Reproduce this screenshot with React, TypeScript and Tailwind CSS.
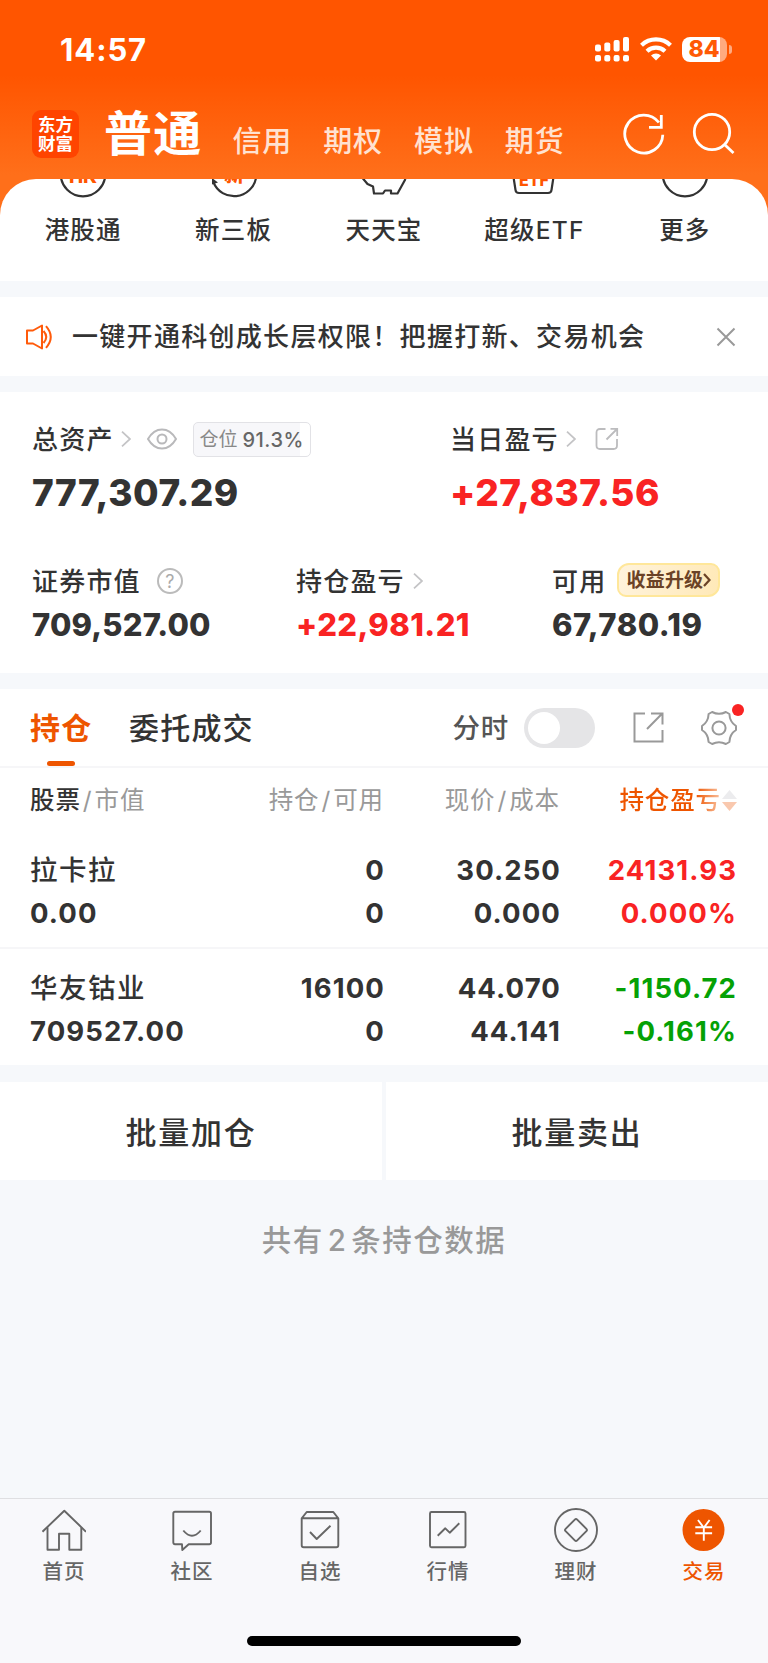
import type { ReactNode } from 'react';

const shortcuts = [
  { label: '港股通', icon: <HkIcon /> },
  { label: '新三板', icon: <NewBoardIcon /> },
  { label: '天天宝', icon: <PiggyIcon /> },
  { label: '超级ETF', icon: <EtfIcon /> },
  { label: '更多', icon: <MoreIcon /> },
];

const holdings = [
  {
    name: '拉卡拉',
    value: '0.00',
    amount: '0',
    available: '0',
    price: '30.250',
    cost: '0.000',
    profit: '24131.93',
    rate: '0.000%',
    color: 'text-[#f92323]',
  },
  {
    name: '华友钴业',
    value: '709527.00',
    amount: '16100',
    available: '0',
    price: '44.070',
    cost: '44.141',
    profit: '-1150.72',
    rate: '-0.161%',
    color: 'text-[#05a105]',
  },
];

/* The shortcut icons are scrolled under the header, only their lower part shows */
function ShortcutSvg({ children }: { children: ReactNode }) {
  return (
    <svg width="60" height="20" viewBox="0 0 60 20" fill="none" stroke="#333" strokeWidth="2.2">
      {children}
    </svg>
  );
}

function HkIcon() {
  return (
    <ShortcutSvg>
      <circle cx="30" cy="-5" r="22.3" />
      <text x="30" y="3.5" textAnchor="middle" fontSize="19" fontWeight="800" fill="#ff5500" stroke="none">
        HK
      </text>
    </ShortcutSvg>
  );
}

function NewBoardIcon() {
  return (
    <ShortcutSvg>
      <path d="M9.5 3.5A22.3 22.3 0 0 0 52 -1" />
      <path d="M8 -1l6 4.5-6 2z" fill="#333" stroke="none" />
      <text x="30" y="3" textAnchor="middle" fontSize="20" fontWeight="800" fill="#ff5500" stroke="none">
        新
      </text>
    </ShortcutSvg>
  );
}

function PiggyIcon() {
  return (
    <ShortcutSvg>
      <path d="M8.5 -1l5 6 5.5 2.5 1 7h9l2-3h6v3h6.5l8-14.5" strokeLinejoin="round" />
    </ShortcutSvg>
  );
}

function EtfIcon() {
  return (
    <ShortcutSvg>
      <path d="M9.5 -2l2 13q.3 3 3.5 3h29q3.2 0 3.5-3l2-13" />
      <text x="30" y="7" textAnchor="middle" fontSize="16" fontWeight="800" fill="#ff5500" stroke="none">
        ETF
      </text>
    </ShortcutSvg>
  );
}

function MoreIcon() {
  return (
    <ShortcutSvg>
      <circle cx="30" cy="-5" r="22.3" />
    </ShortcutSvg>
  );
}

function Arrow({ className }: { className: string }) {
  return (
    <svg className={className} width="10" height="16" viewBox="0 0 10 16" fill="none" stroke="#c4c4c6" strokeWidth="1.8">
      <path d="M1 .7l8 7.3-8 7.3" />
    </svg>
  );
}

function StatusBar() {
  return (
    <div className="flex h-[98px] items-center pl-[60px] pr-[36px]">
      <span className="text-[31px] font-bold leading-none tracking-[0.9px]">14:57</span>
      <svg className="ml-auto" width="34" height="25" viewBox="0 0 34 25" fill="#fff">
        <rect x="0" y="7.5" width="6" height="7" rx="2" />
        <rect x="9.3" y="5.5" width="6" height="9" rx="2" />
        <rect x="18.6" y="3" width="6" height="11.5" rx="2" />
        <rect x="28" y="0" width="6" height="14.5" rx="2" />
        <rect x="0" y="18" width="6" height="6.5" rx="2" />
        <rect x="9.3" y="18" width="6" height="6.5" rx="2" />
        <rect x="18.6" y="18" width="6" height="6.5" rx="2" />
        <rect x="28" y="18" width="6" height="6.5" rx="2" />
      </svg>
      <svg className="ml-[11px]" width="32" height="24" viewBox="0 0 32 24" fill="none" stroke="#fff" strokeWidth="4.2">
        <path d="M1.5 8.2a21 21 0 0 1 29 0" />
        <path d="M7 14.2a13 13 0 0 1 18 0" />
        <path d="M11 18.5a7.3 7.3 0 0 1 10 0l-5 5z" fill="#fff" stroke="none" />
      </svg>
      <div className="ml-[10px] flex items-center">
        <div className="flex h-[25px] w-[45px] items-center justify-center rounded-[8px] bg-[linear-gradient(90deg,#fff_84%,#ffaa80_84%)] pr-[1px] text-[23px] font-extrabold leading-none text-[#ff5a05]">
          84
        </div>
        <div className="ml-[2px] h-[9px] w-[3px] rounded-r-full bg-[#ffaa80]" />
      </div>
    </div>
  );
}

function Header() {
  return (
    <header className="h-[219px] bg-[linear-gradient(180deg,#ff5500_0px,#ff5500_75px,#ff6f1a_175px,#ff6f1a_219px)] text-white">
      <StatusBar />
      <div className="flex h-[81px] pl-8 pr-[33px]">
        <div className="mt-[12px] flex h-[48px] w-[47px] flex-col items-center justify-center rounded-[9px] bg-[#ff4400] text-[17.5px] font-bold leading-[19.5px]">
          <span>东方</span>
          <span>财富</span>
        </div>
        <span className="ml-[25px] mt-[12px] text-[48px] font-bold leading-[48px] tracking-[1.2px]">普通</span>
        <div className="ml-[30px] mt-[29px] flex gap-[31px] text-[29px] font-medium leading-[30px] tracking-[0.9px] text-[#ffe2d1]">
          <span>信用</span>
          <span>期权</span>
          <span>模拟</span>
          <span>期货</span>
        </div>
        <svg className="ml-auto mt-[14px]" width="44" height="44" viewBox="0 0 44 44" fill="none" stroke="#fff" strokeWidth="2.8">
          <path d="M40.8 22.8a19 19 0 1 1-3.9-12.3" />
          <path d="M39.3 3v12.3H27" />
        </svg>
        <svg className="ml-[25px] mt-[14px]" width="44" height="44" viewBox="0 0 44 44" fill="none" stroke="#fff" strokeWidth="2.8">
          <circle cx="21" cy="20" r="17.7" />
          <path d="M33.5 32.5L42.5 41" />
        </svg>
      </div>
    </header>
  );
}

function Notice() {
  return (
    <div className="mt-4 flex h-[79px] items-center bg-white pl-[26px] pr-[32px]">
      <svg width="27" height="26" viewBox="0 0 27 26" fill="none" stroke="#ff5a0a" strokeWidth="2" strokeLinejoin="round">
        <path d="M1 6.5h6l9-5v23l-9-5H1z" />
        <path d="M17.5 7q5.5 6 0 12M20 2.2q9.5 10.8 0 21.6" />
      </svg>
      <span className="ml-[19px] text-[26px] font-medium leading-none tracking-[1.3px]">
        一键开通科创成长层权限！把握打新、交易机会
      </span>
      <svg className="ml-auto" width="20" height="20" viewBox="0 0 20 20" fill="none" stroke="#999" strokeWidth="2">
        <path d="M1.5 1.5l17 17M18.5 1.5l-17 17" />
      </svg>
    </div>
  );
}

function Assets() {
  return (
    <section className="mt-4 h-[281px] bg-white pl-8 pt-[27px]">
      <div className="flex">
        <div className="w-[418px]">
          <div className="flex h-10 items-center text-[26px] font-medium tracking-[1.2px]">
            总资产
            <Arrow className="ml-[7px]" />
            <svg className="ml-[16px]" width="30" height="22" viewBox="0 0 30 22" fill="none" stroke="#b9b9bb" strokeWidth="2">
              <path d="M1 11Q6.5 1.5 15 1.5T29 11Q23.5 20.5 15 20.5T1 11z" />
              <circle cx="15" cy="11" r="4.5" />
            </svg>
            <div className="ml-[16px] flex h-[35px] w-[118px] items-center justify-center rounded-[5px] border border-[#e2e2e6] bg-[linear-gradient(90deg,#f7f7fa_91%,#fff_91%)] pt-[2px] text-[20px] tracking-[0.5px] text-[#666]">
              <span className="mr-[5px] text-[19px] font-normal tracking-normal text-[#888]">仓位</span>91.3%
            </div>
          </div>
          <div className="mt-3 text-[37px] font-extrabold leading-[44px] tracking-[0.5px]">777,307.29</div>
        </div>
        <div>
          <div className="flex h-10 items-center text-[26px] font-medium tracking-[1.2px]">
            当日盈亏
            <Arrow className="ml-[7px]" />
            <svg className="ml-[19px]" width="24" height="24" viewBox="0 0 24 24" fill="none" stroke="#bcbcbe" strokeWidth="1.8">
              <path d="M10.5 2H5q-3.5 0-3.5 3.5v13Q1.5 22 5 22h13.5q3.5 0 3.5-3.5V12" />
              <path d="M11.5 12.5L22 2M15.5 1.8H22.2V9" />
            </svg>
          </div>
          <div className="mt-3 text-[37px] font-extrabold leading-[44px] tracking-[0.5px] text-[#f92323]">+27,837.56</div>
        </div>
      </div>
      <div className="mt-[48px] flex">
        <div className="w-[264px]">
          <div className="flex h-9 items-center text-[26px] font-medium tracking-[1.2px]">
            证券市值
            <span className="ml-[16px] flex h-[26px] w-[26px] items-center justify-center rounded-full border-2 border-[#bbb] text-[18px] font-normal tracking-normal text-[#aaa]">
              ?
            </span>
          </div>
          <div className="mt-[8px] text-[31px] font-extrabold leading-9 tracking-[0.2px]">709,527.00</div>
        </div>
        <div className="w-[256px]">
          <div className="flex h-9 items-center text-[26px] font-medium tracking-[1.2px]">
            持仓盈亏
            <Arrow className="ml-[8px]" />
          </div>
          <div className="mt-[8px] text-[31px] font-extrabold leading-9 tracking-[0.4px] text-[#f92323]">+22,981.21</div>
        </div>
        <div>
          <div className="flex h-9 items-center text-[26px] font-medium tracking-[1.2px]">
            可用
            <div className="mb-[3px] ml-[11px] flex h-[34px] w-[103px] items-center justify-center rounded-[9px] rounded-br-[12px] rounded-tl-[12px] border-2 border-[#ffe79a] bg-[linear-gradient(100deg,#fff3dc,#ffe9b8)] pt-[3px] text-[19px] font-bold tracking-[0.2px] text-[#6b4226]">
              收益升级
              <svg className="mb-[2px]" width="8" height="14" viewBox="0 0 8 14" fill="none" stroke="#6b4226" strokeWidth="2.2">
                <path d="M1 1l5.5 6L1 13" />
              </svg>
            </div>
          </div>
          <div className="mt-[8px] text-[31px] font-extrabold leading-9 tracking-[0.5px]">67,780.19</div>
        </div>
      </div>
    </section>
  );
}

function Tabs() {
  return (
    <div className="flex h-[79px] border-b-2 border-[#f6f6f8] pl-[30px] pr-[31px]">
      <div className="flex w-[62px] flex-col whitespace-nowrap text-[30px] font-bold leading-[79px] tracking-[1.3px] text-[#ee5500]">
        持仓
        <span className="-mt-[7px] ml-[17px] h-[6px] w-[28px] rounded-[3px] bg-[#ee5500]" />
      </div>
      <span className="ml-[37px] text-[30px] font-medium leading-[79px] tracking-[1.2px]">委托成交</span>
      <div className="ml-auto flex h-[77px] items-center">
        <span className="pt-[2px] text-[27.5px] font-medium tracking-[0.7px] text-[#555]">分时</span>
        <div className="ml-[15px] flex h-10 w-[71px] items-center rounded-full bg-[#e5e5e7] pl-1">
          <div className="h-8 w-8 rounded-full bg-white" />
        </div>
        <svg className="ml-[38px]" width="31" height="31" viewBox="0 0 31 31" fill="none" stroke="#999" strokeWidth="2">
          <path d="M12 1.5H1.5v28h28V18" />
          <path d="M14 17L29 1.8M18 1.5H29.5V12.5" />
        </svg>
        <div className="relative ml-[37px]">
          <svg width="36" height="36" viewBox="-18 -18 36 36" fill="none" stroke="#999" strokeWidth="2" strokeLinejoin="round">
            <path d="M17 -2Q10.7 -6 10.4 -14L6.9 -16Q0 -12.3 -6.900 -16L-10.4 -14Q-10.7 -6 -17 -2V2Q-10.7 6 -10.4 14L-6.9 16Q0 12.3 6.9 16L10.4 14Q10.7 6 17 2Z" />
            <circle r="6.6" />
          </svg>
          <span className="absolute -top-[6px] left-[31px] h-3 w-3 rounded-full bg-[#f92323]" />
        </div>
      </div>
    </div>
  );
}

function Holdings() {
  return (
    <section className="mt-4 bg-white">
      <Tabs />
      <div className="grid h-[63px] grid-cols-[180px_174px_176px_177px] items-center pl-[30px] pt-[1px] text-[24.5px] tracking-[0.9px] text-[#999]">
        <div>
          <span className="font-medium text-[#333]">股票</span>
          <span className="mx-[2px]">/</span>市值
        </div>
        <div className="text-right">
          持仓<span className="mx-[2px]">/</span>可用
        </div>
        <div className="text-right">
          现价<span className="mx-[2px]">/</span>成本
        </div>
        <div className="flex items-center justify-end font-medium text-[#ee5500]">
          <span className="bg-[linear-gradient(90deg,#ee5500_75%,#f9c4a4)] bg-clip-text text-transparent">持仓盈亏</span>
          <svg className="ml-[1px]" width="15" height="21" viewBox="0 0 15 21">
            <path d="M7.5 0L15 9H0z" fill="#ececee" />
            <path d="M7.5 21L0 12h15z" fill="#f9c8ae" />
          </svg>
        </div>
      </div>
      {holdings.map((h, i) => (
        <div
          key={h.name}
          className={`grid grid-cols-[180px_175px_176px_176px] pl-[30px] pt-[18px] text-[27.5px] font-bold leading-[43px] tracking-[1.1px] ${i === 0 ? 'h-[118px] border-b-2 border-[#f6f6f8]' : 'h-[116px]'}`}
        >
          <div>
            <div className="text-[27.5px] font-medium tracking-[1.5px]">{h.name}</div>
            <div>{h.value}</div>
          </div>
          <div className="text-right">
            <div>{h.amount}</div>
            <div>{h.available}</div>
          </div>
          <div className="text-right">
            <div>{h.price}</div>
            <div>{h.cost}</div>
          </div>
          <div className={`text-right ${h.color}`}>
            <div>{h.profit}</div>
            <div>{h.rate}</div>
          </div>
        </div>
      ))}
    </section>
  );
}

function NavItem({ label, active, children }: { label: string; active?: boolean; children: ReactNode }) {
  return (
    <div className={`flex flex-1 flex-col items-center pt-[9px] ${active ? 'text-[#ee5500]' : 'text-[#666]'}`}>
      <svg width="44" height="44" viewBox="0 0 44 44" fill="none" stroke="currentColor" strokeWidth="1.9" strokeLinejoin="round">
        {children}
      </svg>
      <span className="mt-[7px] text-[20.5px] font-medium leading-[26px] tracking-[1px]">{label}</span>
    </div>
  );
}

function BottomNav() {
  return (
    <nav className="mt-auto flex h-[165px] flex-col border-t border-[#dfdfe2] bg-[#f8f8fb]">
      <div className="flex">
        <NavItem label="首页">
          <path d="M.5 23.7L22.3 2.7 44 23.7" />
          <path d="M5.5 19.5v22.2H17v-16h10.3v16h12V19.5" />
        </NavItem>
        <NavItem label="社区">
          <path d="M5 3.7h34.3q1.7 0 1.7 1.7v29.2q0 1.7-1.7 1.7H18.7L12.3 42l-.3-5.7H5q-1.7 0-1.7-1.7V5.4q0-1.7 1.7-1.7z" />
          <path d="M13.3 22.5q8.7 10.5 17.4 0" />
        </NavItem>
        <NavItem label="自选">
          <path d="M3.7 10.3L8.7 4h26.6l5 6.3v27q0 2-2 2H5.7q-2 0-2-2zM3.7 10.3h36.6" />
          <path d="M12 24l6.7 7L32.5 17.7" />
        </NavItem>
        <NavItem label="行情">
          <rect x="4" y="4" width="35.5" height="35.3" rx="1.5" />
          <path d="M11.7 27.7l7.6-7.4 4.4 4.4 9.6-9.4" />
        </NavItem>
        <NavItem label="理财">
          <circle cx="22" cy="22" r="21" />
          <path d="M20.8 11.6q1.2-1.2 2.4 0l9.2 9.2q1.2 1.2 0 2.4l-9.2 9.2q-1.2 1.2-2.4 0l-9.2-9.2q-1.2-1.2 0-2.4z" />
        </NavItem>
        <NavItem label="交易" active>
          <circle cx="21.5" cy="22" r="21" fill="currentColor" stroke="none" />
          <path d="M16 12l5.8 7.7L27.6 12M21.8 19.3v13.4M13.3 19.3h16.8M13.3 25.3h16.8" stroke="#fff" />
        </NavItem>
      </div>
      <div className="mx-auto mt-auto mb-[17px] h-[10px] w-[274px] rounded-full bg-black" />
    </nav>
  );
}

export default function App() {
  return (
    <div className="flex h-[1663px] w-[768px] flex-col overflow-hidden bg-[#f6f8fb] font-[Inter,'Noto_Sans_CJK_SC',sans-serif] text-[#333]">
      <Header />
      <div className="relative -mt-10 flex h-[102px] overflow-hidden rounded-t-[36px] bg-white px-2">
        {shortcuts.map((s) => (
          <div key={s.label} className="flex flex-1 flex-col items-center">
            {s.icon}
            <span className="mt-[16px] text-[24.5px] font-medium leading-[30px] tracking-[1.2px]">{s.label}</span>
          </div>
        ))}
      </div>
      <Notice />
      <Assets />
      <Holdings />
      <div className="mt-[17px] flex h-[98px] gap-1 text-[31px] font-medium leading-[102px] tracking-[1.7px]">
        <div className="flex-1 bg-white text-center">批量加仓</div>
        <div className="flex-1 bg-white text-center">批量卖出</div>
      </div>
      <div className="mt-[40px] text-center text-[29.5px] font-medium leading-10 tracking-[1.5px] text-[#999]">
        共有<span className="mx-[4px]">2</span>条持仓数据
      </div>
      <BottomNav />
    </div>
  );
}
